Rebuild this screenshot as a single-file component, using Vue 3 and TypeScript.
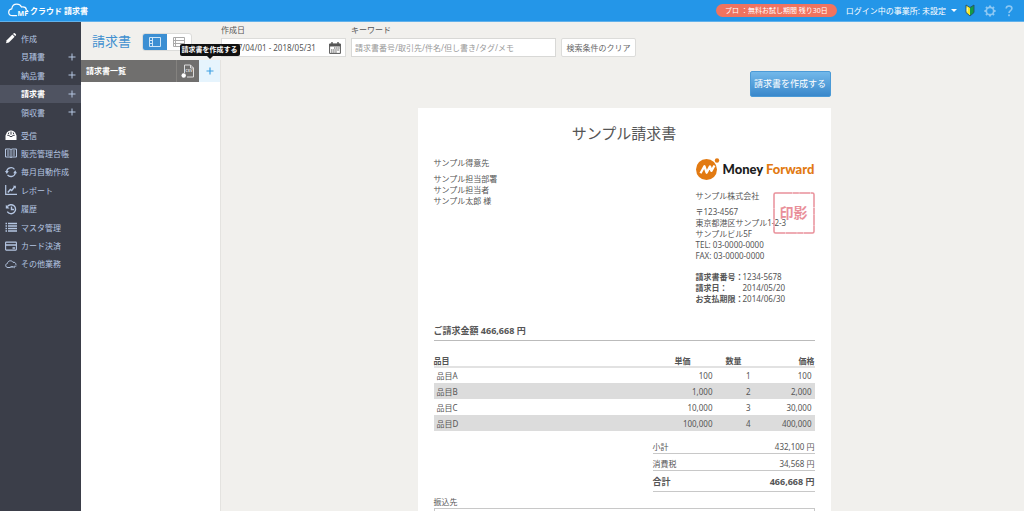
<script setup lang="ts">
import { ref } from 'vue'

interface DocMenu { label: string; active?: boolean }
interface NavItem { label: string; icon: string }
interface InvoiceLine { name: string; price: string; qty: number; amount: string }

const documents: DocMenu[] = [
  { label: '見積書' },
  { label: '納品書' },
  { label: '請求書', active: true },
  { label: '領収書' },
]

const navItems: NavItem[] = [
  { label: '受信', icon: 'inbox' },
  { label: '販売管理台帳', icon: 'book' },
  { label: '毎月自動作成', icon: 'sync' },
  { label: 'レポート', icon: 'chart' },
  { label: '履歴', icon: 'history' },
  { label: 'マスタ管理', icon: 'list' },
  { label: 'カード決済', icon: 'card' },
  { label: 'その他業務', icon: 'cloud' },
]

const lines: InvoiceLine[] = [
  { name: '品目A', price: '100', qty: 1, amount: '100' },
  { name: '品目B', price: '1,000', qty: 2, amount: '2,000' },
  { name: '品目C', price: '10,000', qty: 3, amount: '30,000' },
  { name: '品目D', price: '100,000', qty: 4, amount: '400,000' },
]

const period = ref('2017/04/01 - 2018/05/31')
const keyword = ref('')
const view = ref<'split' | 'list'>('split')
</script>

<template>
  <div class="app">
    <header class="topbar">
      <a class="brand" href="#" aria-label="MFクラウド請求書">
        <svg class="brand-mark" viewBox="0 0 22 14" aria-hidden="true">
          <path d="M8.500 11.700H4.800C2.300 11.700.7 10.200.7 8.200C.7 6.400 2 5 3.800 4.800C4.100 2 6.200.2 8.800.2C10.900.2 12.600 1.200 13.500 3C16.300 2.200 18.500 3.800 18.300 6C19.300 6.100 19.900 6.700 20 7.600" fill="none" stroke="#fff" stroke-width="1.200" stroke-linecap="round" />
          <text x="9.600" y="12" font-size="7" font-weight="700" fill="#fff">MF</text>
        </svg>
        <span>クラウド 請求書</span>
      </a>
      <div class="account">
        <a class="trial" href="#">プロ ：無料お試し期間 残り30日</a>
        <button class="office" type="button">ログイン中の事業所: 未設定<i class="caret"></i></button>
        <button class="icon-button beginner" type="button" aria-label="初心者ガイド">
          <svg viewBox="0 0 10 13" aria-hidden="true">
            <path d="M1 1L5 3.500V12L1 8.500Z" fill="#f6e927" />
            <path d="M9 1L5 3.500V12L9 8.500Z" fill="#149b45" />
            <path d="M1 1L5 3.500L9 1V8.500L5 12L1 8.500Z" fill="none" stroke="#27516b" stroke-width=".9" />
            <path d="M2.200 3.500V7.500" stroke="#fff" stroke-width=".8" />
          </svg>
        </button>
        <button class="icon-button gear" type="button" aria-label="設定">
          <svg viewBox="0 0 12 12" aria-hidden="true">
            <circle cx="6" cy="6" r="3.700" fill="none" stroke="#8dc8f3" stroke-width="1.700" />
            <path d="M6 .4V2M6 10V11.600M.4 6H2M10 6H11.600M2 2L3.200 3.200M8.800 8.800L10 10M2 10L3.200 8.800M8.800 3.200L10 2" stroke="#8dc8f3" stroke-width="2" />
          </svg>
        </button>
        <button class="icon-button help" type="button" aria-label="ヘルプ">
          <svg viewBox="0 0 8 12" aria-hidden="true">
            <path d="M1.200 3.500C1.300 1.900 2.500 1 4 1C5.700 1 6.900 2 6.900 3.500C6.900 5.500 4 5.600 4 8" fill="none" stroke="#8dc8f3" stroke-width="1.600" />
            <rect x="3.100" y="9.400" width="1.800" height="1.800" fill="#8dc8f3" />
          </svg>
        </button>
      </div>
    </header>

    <div class="shell">
      <nav class="sidebar" aria-label="メインメニュー">
        <ul class="menu menu-docs">
          <li class="row">
            <a href="#">
              <svg class="nav-icon" viewBox="0 0 12 12" aria-hidden="true">
                <path d="M1 11.200L1.700 8.200L7.400 2.500L9.600 4.700L3.900 10.400Z" fill="#fff" />
                <path d="M8 1.900L8.700 1.200Q9.300.7 9.900 1.200L10.900 2.200Q11.400 2.800 10.900 3.400L10.200 4.100Z" fill="#fff" />
              </svg>
              <span>作成</span>
            </a>
          </li>
          <li v-for="doc in documents" :key="doc.label" class="row sub" :class="{ active: doc.active }">
            <a href="#">{{ doc.label }}</a>
            <button type="button" class="add" :aria-label="doc.label + 'を作成'">
              <svg viewBox="0 0 8 8" aria-hidden="true"><path d="M4 .5V7.500M.5 4H7.500" stroke="#b5c6e2" /></svg>
            </button>
          </li>
        </ul>
        <ul class="menu menu-main">
          <li v-for="item in navItems" :key="item.label" class="row">
            <a href="#">
              <svg class="nav-icon" viewBox="0 0 12 12" aria-hidden="true" fill="none" stroke="#b5c6e2">
                <template v-if="item.icon === 'inbox'">
                  <path d="M.5 6.500L2 3.200Q4 1.300 6 1.500Q8 1.300 10 3.200L11.500 6.500V11H.5Z" fill="#fff" stroke="none" />
                  <path d="M2.300 6.300H4.200L4.900 7.500H7.100L7.800 6.300H9.700M6 2.500V5.700M3.800 3.500L3.300 5M8.200 3.500L8.700 5" stroke="#3b3e49" />
                </template>
                <template v-else-if="item.icon === 'book'">
                  <path d="M.5 2H5L6 2.600L7 2H11.500V10H7L6 10.600L5 10H.5ZM6 2.600V10.600M2 4H4.500M2 6H4.500M2 8H4.500M7.500 4H10M7.500 6H10M7.500 8H10" />
                </template>
                <template v-else-if="item.icon === 'sync'">
                  <path d="M1.600 5.500A4.500 4.500 0 0 1 9.500 3.300M10.400 6.500A4.500 4.500 0 0 1 2.500 8.900" stroke-width="1.300" />
                  <path d="M0 5L1.800 8L3.800 5ZM8.200 7.200L10.200 4.200L12 7.200Z" fill="#b5c6e2" stroke="none" />
                </template>
                <template v-else-if="item.icon === 'chart'">
                  <path d="M.7 1V10.300H12" stroke-width="1.200" />
                  <path d="M2.800 8.500L5.300 5.500L6.700 6.500L9.500 3" stroke-width="1.400" />
                  <path d="M7.800 1.800H10.800V4.800Z" fill="#b5c6e2" stroke="none" />
                </template>
                <template v-else-if="item.icon === 'history'">
                  <path d="M2.300 3.700A4.500 4.500 0 1 1 2.300 8.700M6.500 3.500V6.500H9" stroke-width="1.400" />
                  <path d="M.8 1.800V5.500H4.500Z" fill="#b5c6e2" stroke="none" />
                </template>
                <template v-else-if="item.icon === 'list'">
                  <path d="M.5 2.500H2M3 2.500H12M.5 5H2M3 5H12M.5 7.500H2M3 7.500H12M.5 10H2M3 10H12" stroke-width="1.300" />
                </template>
                <template v-else-if="item.icon === 'card'">
                  <rect x=".6" y="2.100" width="10.800" height="8" rx=".6" stroke-width="1.100" />
                  <path d="M.6 5H11.400M7.500 8H10" stroke-width="1.300" />
                </template>
                <template v-else>
                  <path d="M5.500 9.500H3C1.500 9.500.7 8.600.7 7.400C.7 6.300 1.500 5.600 2.400 5.500C2.600 3.800 3.900 2.800 5.400 2.800C6.600 2.800 7.500 3.400 8 4.300C9.700 3.900 10.800 5 10.900 6.500L11.500 7.200" />
                  <path d="M6 10V8L7 9.300L8 8V10M9.300 10.200V8.200H11.300" stroke-width=".8" />
                </template>
              </svg>
              <span>{{ item.label }}</span>
            </a>
          </li>
        </ul>
      </nav>

      <div class="workspace">
        <div class="toolbar">
          <div class="heading">
            <h1>請求書</h1>
            <div class="switch" role="group" aria-label="表示切替">
              <button type="button" :class="{ on: view === 'split' }" aria-label="分割表示" @click="view = 'split'">
                <svg viewBox="0 0 12 10" aria-hidden="true" fill="none" stroke="#cfe6f8"><path d="M.5.5H11.500V9.500H.5ZM3.500.5V9.500M1 3.500H3M1 6.500H3" /></svg>
              </button>
              <button type="button" :class="{ on: view === 'list' }" aria-label="一覧表示" @click="view = 'list'">
                <svg viewBox="0 0 12 10" aria-hidden="true" fill="none" stroke="#aaa"><path d="M.5.5H11.500V9.500H.5ZM.5 3.500H11.500M.5 6.500H11.500M2.500.5V9.500" /></svg>
              </button>
            </div>
          </div>
          <form class="filters" @submit.prevent>
            <div class="field field-date">
              <label for="period">作成日</label>
              <div class="date-box">
                <input id="period" v-model="period" type="text">
                <svg viewBox="0 0 12 12" aria-hidden="true">
                  <path d="M.6 2H11.400V11.400H.6Z" fill="#fff" stroke="#555" />
                  <path d="M.6 1.800H11.400V4.500H.6Z" fill="#555" />
                  <path d="M3 0V3M9 0V3" stroke="#555" stroke-width="1.400" />
                  <path d="M5 6H10.500M2 8H10.500M2 10H8" stroke="#555" stroke-width="1.200" stroke-dasharray="1.500 .6" />
                </svg>
              </div>
            </div>
            <div class="field field-keyword">
              <label for="keyword">キーワード</label>
              <input id="keyword" v-model="keyword" type="text" placeholder="請求書番号/取引先/件名/但し書き/タグ/メモ">
            </div>
            <button class="clear" type="button" @click="keyword = ''">検索条件のクリア</button>
          </form>
        </div>

        <div class="panes">
          <aside class="list-pane">
            <div class="list-head">
              <h2>請求書一覧</h2>
              <button class="csv" type="button" aria-label="CSV出力">
                <svg viewBox="0 0 14 14" aria-hidden="true">
                  <path d="M3.500 9V1H9.500L12.500 4V13H6M9.500 1V4H12.500" fill="none" stroke="#ddd" />
                  <text x="4.200" y="8.400" font-size="4" font-weight="700" fill="#ddd">CSV</text>
                  <circle cx="2.700" cy="11.500" r="2.200" fill="#fff" />
                </svg>
              </button>
              <button class="new" type="button" aria-label="請求書を作成する">
                <svg viewBox="0 0 8 8" aria-hidden="true"><path d="M4 .5V7.500M.5 4H7.500" stroke="#3d9fe3" stroke-width="1.200" /></svg>
                <span class="tooltip" role="tooltip">請求書を作成する</span>
              </button>
            </div>
          </aside>

          <main class="preview">
            <div class="sheet-wrap">
              <div class="actions">
                <button class="create" type="button">請求書を作成する</button>
              </div>
              <article class="sheet">
                <h3>サンプル請求書</h3>
                <div class="parties">
                  <div class="client">
                    <p class="lead">サンプル得意先</p>
                    <p>サンプル担当部署<br>サンプル担当者<br>サンプル太郎 様</p>
                  </div>
                  <div class="sender">
                    <div class="company-logo">
                      <svg viewBox="0 0 24 22" aria-hidden="true">
                        <circle cx="10.500" cy="11.500" r="10.500" fill="#e27a12" />
                        <circle cx="21" cy="2.500" r="2.200" fill="#e27a12" />
                        <path d="M4.500 15.200L8.400 8.200L10.600 14.700L14 8.400L15.400 12.800L18.500 7.500" fill="none" stroke="#fff" stroke-width="2.300" stroke-linejoin="round" />
                      </svg>
                      <span>Money <b>Forward</b></span>
                    </div>
                    <div class="address">
                      <p class="lead">サンプル株式会社</p>
                      <p>〒123-4567<br>東京都港区サンプル1-2-3<br>サンプルビル5F<br>TEL: 03-0000-0000<br>FAX: 03-0000-0000</p>
                      <div class="stamp">
                        <svg viewBox="0 0 42 42" aria-hidden="true">
                          <rect x="1" y="1" width="40" height="40" rx="1.500" fill="none" stroke="#e9909a" stroke-width="1.500" stroke-dasharray="17 .4 6 .3 11 .4" />
                        </svg>
                        <span>印影</span>
                      </div>
                    </div>
                    <dl class="meta">
                      <dt>請求書番号：</dt><dd>1234-5678</dd>
                      <dt>請求日：</dt><dd>2014/05/20</dd>
                      <dt>お支払期限：</dt><dd>2014/06/30</dd>
                    </dl>
                  </div>
                </div>
                <p class="billed">ご請求金額 466,668 円</p>
                <table class="items">
                  <thead>
                    <tr><th scope="col">品目</th><th scope="col" class="price">単価</th><th scope="col" class="qty">数量</th><th scope="col" class="amount">価格</th></tr>
                  </thead>
                  <tbody>
                    <tr v-for="line in lines" :key="line.name">
                      <td>{{ line.name }}</td>
                      <td class="price">{{ line.price }}</td>
                      <td class="qty">{{ line.qty }}</td>
                      <td class="amount">{{ line.amount }}</td>
                    </tr>
                  </tbody>
                </table>
                <dl class="totals">
                  <div><dt>小計</dt><dd>432,100 円</dd></div>
                  <div><dt>消費税</dt><dd>34,568 円</dd></div>
                  <div class="grand"><dt>合計</dt><dd>466,668 円</dd></div>
                </dl>
                <section class="bank">
                  <h4>振込先</h4>
                  <div class="bank-box"></div>
                </section>
              </article>
            </div>
          </main>
        </div>
      </div>
    </div>
  </div>
</template>

<style>
body { margin: 0; background: #f1f0ed; }
</style>

<style scoped>
.app {
  display: flex;
  flex-direction: column;
  height: 100vh;
  overflow: hidden;
  background: #f1f0ed;
  color: #555;
  font-family: "Noto Sans", "Noto Sans CJK JP", sans-serif;
  font-size: 8px;
  line-height: 11px;
}
.app * { box-sizing: border-box; }
h1, h2, h3, h4, p, ul, dl, dd { margin: 0; padding: 0; }
h1, h2, h3, h4 { font-weight: 400; }
ul { list-style: none; }
a { color: inherit; text-decoration: none; }
button, input { font: inherit; color: inherit; margin: 0; }
button { display: inline-flex; align-items: center; justify-content: center; padding: 0; border: 0; background: none; cursor: pointer; white-space: nowrap; }
svg { display: block; flex: none; overflow: visible; }

.topbar {
  display: flex;
  flex: none;
  align-items: center;
  justify-content: space-between;
  height: 22px;
  padding: 0 11px 0 8px;
  border-bottom: 1px solid #62b1ea;
  background: #2496e8;
  color: #fff;
}
.brand { display: flex; align-items: center; font-weight: 700; }
.brand-mark { width: 22px; height: 14px; }
.account { display: flex; align-items: center; }
.trial { padding: 1px 9px; border-radius: 7px; background: #f0735f; font-size: 7px; }
.office { margin-left: 9px; }
.caret { margin-left: 5px; border: 3px solid transparent; border-top-color: #fff; border-bottom: 0; }
.beginner { margin-left: 8px; }
.beginner svg { width: 10px; height: 13px; }
.gear { margin-left: 9px; }
.gear svg { width: 12px; height: 12px; }
.help { margin-left: 9px; }
.help svg { width: 8px; height: 12px; }

.shell { display: flex; flex: 1; min-height: 0; }
.sidebar { flex: none; width: 81px; padding-top: 7px; background: #3b3e49; color: #b5c6e2; }
.menu { display: grid; grid-auto-rows: 18px; align-content: space-between; }
.menu-docs { min-height: 92px; }
.menu-main { min-height: 147px; margin-top: 5px; }
.row { display: flex; align-items: center; justify-content: space-between; padding: 0 5px; }
.row a { display: flex; align-items: center; gap: 4px; }
.nav-icon { width: 12px; height: 12px; }
.sub { padding-left: 21px; }
.active { background: #4f5361; color: #fff; font-weight: 700; }
.add svg { width: 8px; height: 8px; }

.workspace { display: flex; flex: 1; flex-direction: column; min-width: 0; }
.toolbar { display: flex; flex: none; height: 38px; }
.heading { display: flex; flex: none; align-items: center; gap: 11px; width: 140px; padding-left: 11px; }
.heading h1 { color: #4291d0; font-size: 13px; line-height: 18px; }
.switch { display: flex; margin-top: 2px; overflow: hidden; border: 1px solid #dcdcda; border-radius: 3px; background: #fff; }
.switch button { width: 24px; height: 16px; }
.switch .on { background: #3c8fd3; }
.switch svg { width: 12px; height: 10px; }
.filters { display: flex; flex: 1; align-items: flex-start; gap: 5px; padding-top: 2px; }
.field { display: flex; flex-direction: column; gap: 3px; }
.field-date { width: 125px; }
.field-keyword { width: 205px; }
.date-box { display: flex; align-items: center; height: 19px; padding-right: 4px; border: 1px solid #dcdcda; background: #fff; }
.date-box input { flex: 1; min-width: 0; padding: 0 2px; border: 0; background: none; outline: 0; }
.date-box svg { width: 12px; height: 12px; }
#keyword { width: 100%; height: 19px; padding: 0 3px; border: 1px solid #d8d8d6; background: #fff; }
#keyword::placeholder { color: #999; opacity: 1; }
.clear { width: 75px; height: 19px; margin-top: 14px; border: 1px solid #dcdcda; border-radius: 2px; background: #fff; color: #666; }

.panes { display: flex; flex: 1; min-height: 0; }
.list-pane { flex: none; width: 140px; border-right: 1px solid #e4e3e0; background: #fff; }
.list-head { display: flex; height: 22px; background: #706f6e; color: #fff; }
.list-head h2 { flex: 1; padding-left: 5px; font-size: 8px; font-weight: 700; line-height: 22px; }
.csv { width: 23px; border-left: 1px solid #84827f; }
.csv svg { width: 14px; height: 14px; }
.new { position: relative; width: 21px; background: #e6f4fd; }
.new svg { width: 8px; height: 8px; }
.tooltip {
  position: absolute;
  bottom: 26px;
  left: 50%;
  z-index: 2;
  padding: 0 2px;
  border-radius: 2px;
  background: #111;
  color: #fff;
  font-size: 7px;
  font-weight: 700;
  line-height: 12px;
  transform: translateX(-50%);
}
.tooltip::after {
  content: "";
  position: absolute;
  top: 100%;
  left: 50%;
  margin-left: -3px;
  border: 3px solid transparent;
  border-top-color: #111;
  border-bottom: 0;
}

.preview { flex: 1; min-width: 0; padding: 11px 8px 0 11px; overflow: hidden; }
.sheet-wrap { max-width: 413px; margin: 0 auto; }
.actions { display: flex; justify-content: flex-end; }
.create {
  width: 81px;
  height: 26px;
  padding-bottom: 2px;
  border: 1px solid #4b9ad6;
  border-radius: 2px;
  background: linear-gradient(#72b8ea, #3a88cb);
  color: #fff;
  font-size: 9px;
}
.sheet { margin-top: 11px; padding: 16px; background: #fff; }
.sheet h3 { font-size: 15px; line-height: 18px; text-align: center; }
.parties { display: flex; justify-content: space-between; }
.client { padding-top: 15px; }
.lead { margin-bottom: 5px; }
.sender { width: 119px; padding-top: 16px; }
.company-logo { display: flex; align-items: center; gap: 3px; color: #1c1c1c; font: 900 13px/22px Lato, sans-serif; white-space: nowrap; }
.company-logo svg { width: 24px; height: 22px; }
.company-logo b { color: #e27a12; font-weight: 900; }
.address { position: relative; margin-top: 10px; white-space: nowrap; }
.stamp { position: absolute; top: 2px; right: 0; width: 42px; height: 42px; color: #e9909a; }
.stamp span { position: absolute; inset: 0; font-size: 14px; font-weight: 700; line-height: 42px; text-align: center; }
.meta { display: grid; grid-template-columns: 47px 1fr; margin-top: 10px; white-space: nowrap; }
.meta dt { font-weight: 700; }
.billed { margin-top: 20px; padding-bottom: 2px; border-bottom: 1px solid #bbb; font-size: 9px; font-weight: 700; line-height: 14px; }
.items { width: 100%; margin-top: 13px; border-collapse: collapse; table-layout: fixed; }
.items th { height: 13px; padding: 0; border-bottom: 2px solid #e2e2e2; font-weight: 700; text-align: left; }
.items td { height: 16px; padding: 0 3px; }
.items tbody tr:nth-child(even) { background: #dcdcdc; }
.items .price { width: 82px; text-align: right; }
.items .qty { width: 38px; text-align: right; }
.items .amount { width: 61px; text-align: right; }
.items th.price { padding-right: 25px; }
.items th.qty { padding-right: 12px; }
.totals { width: 162px; margin: 10px 0 0 auto; }
.totals div { display: flex; justify-content: space-between; margin-bottom: 4px; border-bottom: 1px solid #c8c8c8; line-height: 12px; }
.totals .grand { margin-bottom: 0; padding-bottom: 2px; font-size: 9px; font-weight: 700; line-height: 14px; }
.bank { margin-top: 4px; }
.bank-box { height: 60px; margin-top: 1px; border: 1px solid #c8c8c8; }
</style>
